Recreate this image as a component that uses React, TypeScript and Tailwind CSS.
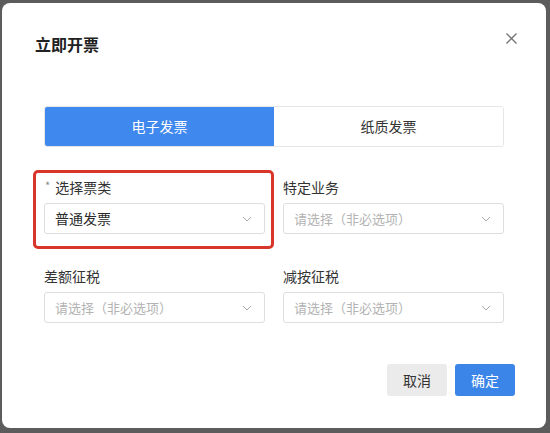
import React from "react";

const font = { fontFamily: '"Noto Sans CJK SC", "Noto Sans", sans-serif' };

function Chevron() {
  return (
    <svg width="10" height="6" viewBox="0 0 10 6" fill="none">
      <path d="M1 1l4 4 4-4" stroke="#ababab" strokeWidth="1" />
    </svg>
  );
}

function Select({ value, placeholder }: { value?: string; placeholder?: string }) {
  return (
    <div className="h-[31px] border border-[#dedede] rounded-[3px] flex items-center justify-between pl-[10px] pr-[12px]">
      {value ? (
        <span className="text-[14px] text-[#2b2b2b]">{value}</span>
      ) : (
        <span className="text-[13px] text-[#b3b3b3]">{placeholder}</span>
      )}
      <Chevron />
    </div>
  );
}

function Field({ label, required, children }: { label: string; required?: boolean; children: React.ReactNode }) {
  return (
    <div className="flex flex-col gap-[6px]">
      <div className="h-[20px] flex items-center text-[14px] text-[#333]">
        {required && <span className="text-[11px] text-[#888] ml-[1px] mr-[5px] -mt-[4px]">*</span>}
        {label}
      </div>
      {children}
    </div>
  );
}

export default function App() {
  return (
    <div className="w-[550px] h-[433px] bg-[#5c5c5c] pt-[3px] pl-[2px] overflow-hidden" style={font}>
      <div className="w-[544px] h-[425px] bg-white rounded-[8px] relative flex flex-col">
        <div className="flex justify-between items-start mt-[30px] pl-[33px] pr-[28px]">
          <h1 className="text-[16px] leading-[22px] font-bold text-[#222]">立即开票</h1>
          <svg width="13" height="13" viewBox="0 0 13 13" className="-mt-[1px]">
            <path d="M1.5 1.5l10 10M11.5 1.5l-10 10" stroke="#777" strokeWidth="1.4" />
          </svg>
        </div>

        <div className="ml-[42px] mt-[51px] w-[460px] h-[41px] flex border border-[#e6e6e6] rounded-[3px] overflow-hidden text-[14px]">
          <div className="flex-1 bg-[#3f88ee] text-white flex items-center justify-center">电子发票</div>
          <div className="flex-1 bg-white text-[#333] flex items-center justify-center">纸质发票</div>
        </div>

        <div className="ml-[42px] mt-[30px] w-[460px] grid grid-cols-2 gap-x-[18px] gap-y-[32px]">
          <Field label="选择票类" required>
            <Select value="普通发票" />
          </Field>
          <Field label="特定业务">
            <Select placeholder="请选择（非必选项）" />
          </Field>
          <Field label="差额征税">
            <Select placeholder="请选择（非必选项）" />
          </Field>
          <Field label="减按征税">
            <Select placeholder="请选择（非必选项）" />
          </Field>
        </div>

        <div className="flex justify-end gap-[8px] mt-[41px] pr-[31px]">
          <button className="w-[60px] h-[32px] rounded-[3px] bg-[#ebebeb] text-[14px] text-[#333]">取消</button>
          <button className="w-[60px] h-[32px] rounded-[3px] bg-[#3b84e8] text-[14px] text-white">确定</button>
        </div>

        <div className="absolute left-[31px] top-[167px] w-[241px] h-[79px] border-[3px] border-[#d8362b] rounded-[5px] pointer-events-none" />
      </div>
    </div>
  );
}
